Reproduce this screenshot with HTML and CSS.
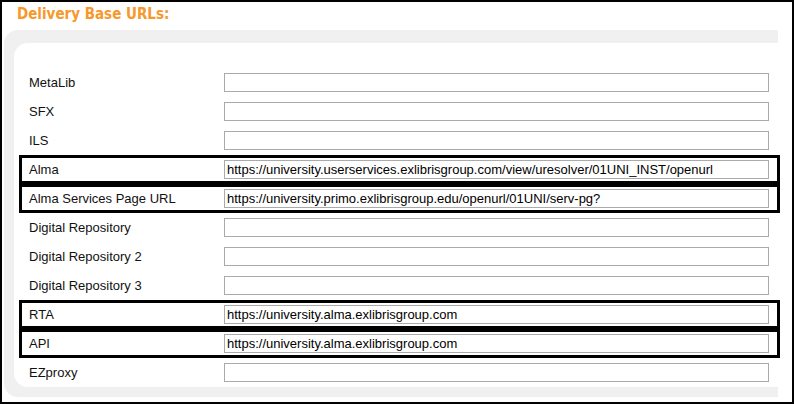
FILE: index.html
```html
<!DOCTYPE html>
<html lang="en">
<head>
    <meta charset="UTF-8">
    <title>Delivery Base URLs</title>
    <link rel="stylesheet" href="styles.css">
</head>
<body>
    <div class="frame">
        <h2 class="section-title">Delivery Base URLs:</h2>
        <div class="panel">
            <div class="panel-body">
                <div class="row">
                    <label>MetaLib</label>
                    <input type="text" value="">
                </div>
                <div class="row">
                    <label>SFX</label>
                    <input type="text" value="">
                </div>
                <div class="row">
                    <label>ILS</label>
                    <input type="text" value="">
                </div>
                <div class="row marked">
                    <label>Alma</label>
                    <input type="text" value="https://university.userservices.exlibrisgroup.com/view/uresolver/01UNI_INST/openurl">
                </div>
                <div class="row marked">
                    <label>Alma Services Page URL</label>
                    <input type="text" value="https://university.primo.exlibrisgroup.edu/openurl/01UNI/serv-pg?">
                </div>
                <div class="row">
                    <label>Digital Repository</label>
                    <input type="text" value="">
                </div>
                <div class="row">
                    <label>Digital Repository 2</label>
                    <input type="text" value="">
                </div>
                <div class="row">
                    <label>Digital Repository 3</label>
                    <input type="text" value="">
                </div>
                <div class="row marked">
                    <label>RTA</label>
                    <input type="text" value="https://university.alma.exlibrisgroup.com">
                </div>
                <div class="row marked">
                    <label>API</label>
                    <input type="text" value="https://university.alma.exlibrisgroup.com">
                </div>
                <div class="row">
                    <label>EZproxy</label>
                    <input type="text" value="">
                </div>
            </div>
        </div>
    </div>
</body>
</html>
```

FILE: styles.css
```css
body {
    margin: 0;
    font-family: "Liberation Sans", Arial, sans-serif;
    background: #fff;
}
.frame {
    width: 794px;
    height: 404px;
    box-sizing: border-box;
    border: 2px solid #000;
    overflow: hidden;
}
.section-title {
    margin: 0;
    height: 28px;
    padding-left: 15px;
    font-family: "DejaVu Sans Condensed", "DejaVu Sans", sans-serif;
    font-stretch: condensed;
    font-size: 15px;
    font-weight: bold;
    line-height: 25px;
    color: #f7982a;
}
.panel {
    margin-left: 2px;
    width: 774px;
    padding: 13px 0 10px 10px;
    box-sizing: border-box;
    background: #f0f0f0;
    border-radius: 14px 0 0 14px;
}
.panel-body {
    width: 776px;
    padding-top: 25px;
    background: #fff;
    border-radius: 14px 0 0 14px;
}
.row {
    display: flex;
    align-items: center;
    height: 29px;
    margin-left: 5px;
    width: 761px;
    box-sizing: border-box;
    padding-left: 10px;
}
.row.marked {
    outline: 3px solid #000;
    outline-offset: -3px;
}
.row label {
    width: 195px;
    font-size: 13px;
    color: #111;
}
.row input {
    width: 545px;
    height: 19px;
    box-sizing: border-box;
    margin: 0;
    padding: 0 2px;
    border: 1px solid #aaa;
    font-family: "Liberation Sans", Arial, sans-serif;
    font-size: 13px;
    color: #000;
    background: #fff;
}
```
